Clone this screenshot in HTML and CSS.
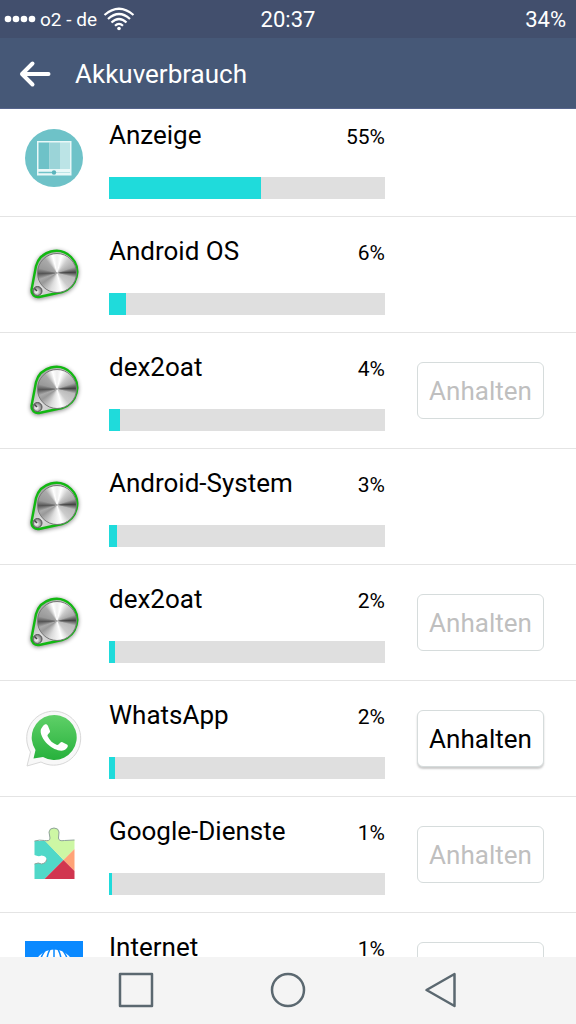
FILE: index.html
```html
<!DOCTYPE html>
<html lang="de">
<head>
    <meta charset="UTF-8">
    <meta name="viewport" content="width=device-width, initial-scale=1.0">
    <title>Akkuverbrauch</title>
    <link rel="stylesheet" href="styles.css">
</head>
<body>
    <!-- shared icons -->
    <svg class="sprite" aria-hidden="true">
        <defs>
            <linearGradient id="plate" x1="0" y1="0" x2="1" y2="1">
                <stop offset="0" stop-color="#888"/>
                <stop offset="0.5" stop-color="#ddd"/>
                <stop offset="1" stop-color="#aaa"/>
            </linearGradient>
            <radialGradient id="screw" cx="0.4" cy="0.6" r="0.6">
                <stop offset="0" stop-color="#fff"/>
                <stop offset="1" stop-color="#777"/>
            </radialGradient>
            <linearGradient id="chat" x1="0" y1="0" x2="0" y2="1">
                <stop offset="0" stop-color="#5fd068"/>
                <stop offset="1" stop-color="#27b13c"/>
            </linearGradient>
            <symbol id="knob" viewBox="0 0 58 58">
                <path d="M11 21 A21 21 0 1 1 37 47 L14 52 A6.5 6.5 0 0 1 6.500 45 Z" fill="url(#plate)" stroke="#12b812" stroke-width="2.4"/>
                <circle cx="12.500" cy="46" r="4.500" fill="url(#screw)" stroke="#555"/>
                <path d="M9.500 43.500 L12 46" stroke="#444" stroke-width="1.500"/>
            </symbol>
        </defs>
    </svg>

    <header>
        <div class="status">
            <div class="carrier">
                <svg width="32" height="8" viewBox="0 0 32 8" fill="#fff">
                    <circle cx="4" cy="4" r="3.300"/><circle cx="12" cy="4" r="3.300"/>
                    <circle cx="20" cy="4" r="3.300"/><circle cx="28" cy="4" r="3.300"/>
                </svg>
                <span>o2 - de</span>
                <svg width="34" height="24" viewBox="0 0 34 24" fill="none" stroke="#fff" stroke-width="2.2">
                    <path d="M3.500 8 Q18 -4.500 32.500 8"/>
                    <path d="M7 12 Q18 2 29 12"/>
                    <path d="M10.500 15.500 Q18 8.500 25.500 15.500"/>
                    <path d="M14 18.700 Q18 15 22 18.700"/>
                    <circle cx="18" cy="21.500" r="1.800" fill="#fff" stroke="none"/>
                </svg>
            </div>
            <div class="time">20:37</div>
            <div class="battery">34%</div>
        </div>
        <div class="titlebar">
            <button class="back" aria-label="Zurück">
                <svg width="32" height="28" viewBox="0 0 32 28" fill="none" stroke="#fff" stroke-width="4" stroke-linecap="round" stroke-linejoin="round">
                    <path d="M29.500 14 H3 M13.500 3.500 L3 14 L13.500 24.500"/>
                </svg>
            </button>
            <h1>Akkuverbrauch</h1>
        </div>
    </header>

    <main>
        <ul class="list">
            <li class="row">
                <div class="icon">
                    <svg viewBox="0 0 58 58">
                        <circle cx="29" cy="29" r="29" fill="#6ec2c8"/>
                        <rect x="12" y="12" width="34.500" height="34.500" fill="#e9f8f8"/>
                        <rect x="13.500" y="13.500" width="11" height="26.500" fill="#6ec2c8"/>
                        <rect x="24.500" y="13.500" width="10.500" height="26.500" fill="#9bd4d8"/>
                        <rect x="35" y="13.500" width="10" height="26.500" fill="#bce4e6"/>
                        <path d="M13.500 43.500 H29" stroke="#6ec2c8" stroke-width="1.500"/>
                        <path d="M29 43.500 H45" stroke="#bce4e6"/>
                        <circle cx="29" cy="43.500" r="2.200" fill="#5ab4bc"/>
                    </svg>
                </div>
                <div class="usage">
                    <div class="info"><label for="p1">Anzeige</label><span>55%</span></div>
                    <progress id="p1" max="100" value="55"></progress>
                </div>
                <div class="action"></div>
            </li>
            <li class="row">
                <div class="icon knob"><svg><use href="#knob"/></svg></div>
                <div class="usage">
                    <div class="info"><label for="p2">Android OS</label><span>6%</span></div>
                    <progress id="p2" max="100" value="6"></progress>
                </div>
                <div class="action"></div>
            </li>
            <li class="row">
                <div class="icon knob"><svg><use href="#knob"/></svg></div>
                <div class="usage">
                    <div class="info"><label for="p3">dex2oat</label><span>4%</span></div>
                    <progress id="p3" max="100" value="4"></progress>
                </div>
                <div class="action"><button class="stop" disabled>Anhalten</button></div>
            </li>
            <li class="row">
                <div class="icon knob"><svg><use href="#knob"/></svg></div>
                <div class="usage">
                    <div class="info"><label for="p4">Android-System</label><span>3%</span></div>
                    <progress id="p4" max="100" value="3"></progress>
                </div>
                <div class="action"></div>
            </li>
            <li class="row">
                <div class="icon knob"><svg><use href="#knob"/></svg></div>
                <div class="usage">
                    <div class="info"><label for="p5">dex2oat</label><span>2%</span></div>
                    <progress id="p5" max="100" value="2"></progress>
                </div>
                <div class="action"><button class="stop" disabled>Anhalten</button></div>
            </li>
            <li class="row">
                <div class="icon chat">
                    <svg viewBox="0 0 58 58">
                        <path d="M2 57 L5.500 43 A27 27 0 1 1 16 53 Z" fill="#f8f8f8" stroke="#d8d8d8"/>
                        <path d="M8.500 49.500 L10.500 41 A22.500 22.500 0 1 1 18 48 Z" fill="url(#chat)"/>
                        <path d="M18 17 C20 14.500 22 15 23 17 L25 22 C25.500 24 22 25 22.500 27 C24.500 31.500 28 34.500 32 36 C34 36.500 35 32.500 37 33 L42 35.500 C44 36.500 42 40 39.500 41 C35 43 28 40 23 35.500 C18 31 14.500 24 16 20 Z" fill="#fff"/>
                    </svg>
                </div>
                <div class="usage">
                    <div class="info"><label for="p6">WhatsApp</label><span>2%</span></div>
                    <progress id="p6" max="100" value="2"></progress>
                </div>
                <div class="action"><button class="stop">Anhalten</button></div>
            </li>
            <li class="row">
                <div class="icon">
                    <svg viewBox="0 0 58 58">
                        <g transform="translate(-0.5 1)">
                            <path d="M10 15 L21 15 L39 34 L20 53 H10 V38 Q14 36 17 38 Q22 37 22 33.500 Q22 30 17 29.500 Q14 31 10 29 Z" fill="#50d8c8"/>
                            <path d="M20 14.500 Q25.500 15.500 25.500 12 L24.500 6 Q25 2 29.500 2 Q34 2 34.500 6 L34 12 Q34 15.500 40 14.500 L50 14 V23 L39 34 Z" fill="#cdf7a4"/>
                            <path d="M50 23 V45 L39 34 Z" fill="#ffa377"/>
                            <path d="M39 34 L50 45 V53 H20 Z" fill="#d1354f"/>
                            <path d="M10 15 Q15 13.500 20 14.500 Q25.500 15.500 25.500 12 L24.500 6 Q25 2 29.500 2 Q34 2 34.500 6 L34 12 Q34 15.500 40 14.500 L50 14 M10 38 Q14 36 17 38 Q22 37 22 33.500" fill="none" stroke="#8fa39a"/>
                        </g>
                    </svg>
                </div>
                <div class="usage">
                    <div class="info"><label for="p7">Google-Dienste</label><span>1%</span></div>
                    <progress id="p7" max="100" value="1"></progress>
                </div>
                <div class="action"><button class="stop" disabled>Anhalten</button></div>
            </li>
            <li class="row">
                <div class="icon">
                    <svg viewBox="0 0 58 58">
                        <rect width="58" height="58" fill="#0a89ff"/>
                        <circle cx="29" cy="29" r="20.500" fill="#fff"/>
                        <g fill="none" stroke="#0a89ff" stroke-width="1.500">
                            <path d="M29 8 V50 M8 29 H50"/>
                            <ellipse cx="29" cy="29" rx="8" ry="24"/>
                            <ellipse cx="29" cy="29" rx="15" ry="24"/>
                        </g>
                    </svg>
                </div>
                <div class="usage">
                    <div class="info"><label for="p8">Internet</label><span>1%</span></div>
                    <progress id="p8" max="100" value="1"></progress>
                </div>
                <div class="action"><button class="stop" disabled>Anhalten</button></div>
            </li>
        </ul>
    </main>

    <nav>
        <button aria-label="Übersicht">
            <svg viewBox="0 0 38 38"><rect x="3" y="3" width="32" height="32"/></svg>
        </button>
        <button aria-label="Start">
            <svg viewBox="0 0 38 38"><circle cx="19" cy="19" r="16"/></svg>
        </button>
        <button aria-label="Zurück">
            <svg viewBox="0 0 38 38"><path d="M33.500 3 V35 L5.500 19 Z"/></svg>
        </button>
    </nav>
</body>
</html>
```

FILE: styles.css
```css
* {
    box-sizing: border-box;
}
body {
    font-family: Roboto, sans-serif;
    display: flex;
    flex-direction: column;
    height: 100vh;
    margin: 0;
    background-color: white;
    color: black;
}
button {
    font-family: inherit;
    background: none;
    border: none;
    padding: 0;
}
svg {
    display: block;
}
.sprite {
    position: absolute;
    width: 0;
    height: 0;
}

/* header */
.status {
    display: grid;
    grid-template-columns: 1fr auto 1fr;
    align-items: center;
    height: 38px;
    padding: 0 4px;
    background-color: #424f6d;
    color: white;
    font-size: 22px;
}
.carrier {
    display: flex;
    align-items: center;
    gap: 4px;
    font-size: 19px;
}
.battery {
    padding-right: 6px;
    text-align: right;
}
.titlebar {
    display: flex;
    align-items: center;
    gap: 24px;
    height: 71px;
    padding: 2px 19px 0;
    background-color: #465877;
    border-bottom: 1px solid #56648c;
    color: white;
}
.titlebar h1 {
    margin: 0;
    font-size: 26px;
    font-weight: 400;
}

/* list */
main {
    flex: 1;
    min-height: 0;
    overflow: hidden;
}
.list {
    list-style: none;
    margin: -8px 0 0;
    padding: 0;
}
.row {
    display: flex;
    align-items: flex-start;
    height: 116px;
    padding: 0 32px 0 25px;
    border-bottom: 1px solid #e4e4e4;
}
.icon {
    position: relative;
    width: 58px;
    height: 58px;
    margin: 28px 26px 0 0;
}
.icon svg {
    width: 58px;
    height: 58px;
}
.knob svg {
    filter: drop-shadow(0 1px 2px #888);
}
/* brushed metal disc */
.knob::after {
    content: "";
    position: absolute;
    left: 12px;
    top: 8px;
    width: 38px;
    height: 38px;
    border: 1px solid #777;
    border-radius: 50%;
    background: conic-gradient(#eee 0deg, #fff 15deg, #ccc 40deg, #aaa 70deg, #444 88deg, #bbb 105deg, #ccc 140deg, #fff 165deg, #ddd 200deg, #999 235deg, #aaa 250deg, #555 268deg, #999 285deg, #aaa 320deg, #fff 345deg, #eee 360deg);
}
.usage {
    flex: 1;
    margin-right: 32px;
    padding-top: 19px;
}
.info {
    display: flex;
    justify-content: space-between;
    align-items: baseline;
    margin-bottom: 25px;
    line-height: 30px;
    font-size: 26px;
}
.info span {
    font-size: 21px;
}
progress {
    display: block;
    width: 100%;
    height: 22px;
    appearance: none;
    border: none;
}
progress::-webkit-progress-bar {
    background-color: #dfdfdf;
}
progress::-webkit-progress-value {
    background-color: #1fdbdb;
}
.action {
    width: 127px;
    padding-top: 29px;
}
.stop {
    width: 100%;
    height: 57px;
    border: 1px solid #d6dcdc;
    border-radius: 6px;
    font-size: 26px;
    color: black;
    box-shadow: 0 2px 2px #ccc;
    background-color: white;
}
.stop:disabled {
    color: #bfbfbf;
    box-shadow: none;
}

/* navigation */
nav {
    display: flex;
    justify-content: center;
    align-items: center;
    gap: 96px;
    height: 67px;
    padding-bottom: 2px;
    background-color: #f4f4f4;
}
nav button {
    width: 56px;
    height: 56px;
}
nav svg {
    width: 38px;
    height: 38px;
    margin: 0 auto;
    fill: none;
    stroke: #5b6870;
    stroke-width: 2.5;
    stroke-linejoin: round;
}
```
